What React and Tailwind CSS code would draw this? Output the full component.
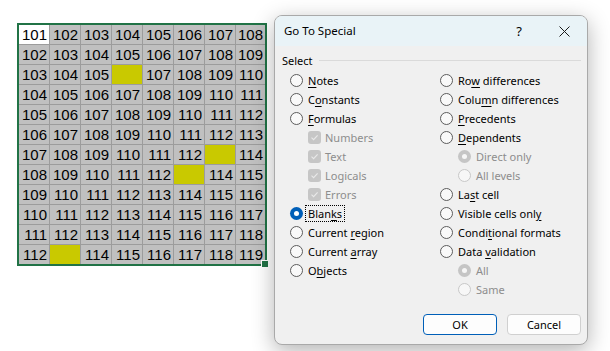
import React from "react";

const ROWS = 12;
const COLS = 8;
const YELLOW = new Set(["2-3", "6-6", "7-5", "11-1"]);

function Grid() {
  const cells = [];
  for (let r = 0; r < ROWS; r++) {
    for (let c = 0; c < COLS; c++) {
      const key = `${r}-${c}`;
      const yellow = YELLOW.has(key);
      const first = r === 0 && c === 0;
      cells.push(
        <div
          key={key}
          className={`h-[19px] flex items-center justify-end pr-[2px] ${
            yellow ? "bg-[#c9c900]" : first ? "bg-white" : "bg-[#c0c0c0]"
          }`}
        >
          {!yellow && <span>{101 + r + c}</span>}
        </div>
      );
    }
  }
  return (
    <div className="relative ml-[17px] mt-[22px] w-fit border-2 border-[#217346]">
      <div
        className="grid grid-cols-[repeat(7,30px)_29px] gap-px bg-[#9c9c9c] text-[15px] leading-none text-black"
        style={{ fontFamily: '"Liberation Sans", Arial, sans-serif' }}
      >
        {cells}
      </div>
      <div className="absolute right-[-4px] bottom-[-4px] w-[6px] h-[6px] bg-[#217346] border border-white box-content" />
    </div>
  );
}

function Radio({ checked, disabled }) {
  if (checked && !disabled) {
    return (
      <span className="w-[13px] h-[13px] rounded-full bg-[#005fb8] flex items-center justify-center shrink-0">
        <span className="w-[5px] h-[5px] rounded-full bg-white" />
      </span>
    );
  }
  if (checked && disabled) {
    return (
      <span className="w-[13px] h-[13px] rounded-full bg-[#c5c5c5] flex items-center justify-center shrink-0">
        <span className="w-[5px] h-[5px] rounded-full bg-[#f6f6f6]" />
      </span>
    );
  }
  return (
    <span
      className={`w-[13px] h-[13px] rounded-full border shrink-0 ${
        disabled ? "border-[#c8c8c8] bg-[#f7f7f7]" : "border-[#5c5c5c] bg-[#f9f9f9]"
      }`}
    />
  );
}

function Check() {
  return (
    <span className="w-[13px] h-[13px] rounded-[3px] bg-[#c6c6c6] flex items-center justify-center shrink-0">
      <svg width="9" height="9" viewBox="0 0 9 9">
        <path d="M1.5 4.7 L3.6 6.7 L7.6 2.3" fill="none" stroke="#e9e9e9" strokeWidth="1.1" />
      </svg>
    </span>
  );
}

function Label({ pre = "", u = "", post = "", disabled, focus }) {
  return (
    <span
      className={`whitespace-nowrap ${disabled ? "text-[#8d8d8d]" : "text-black"} ${
        focus ? "outline-1 outline-dotted outline-black outline-offset-[2px]" : ""
      }`}
    >
      {pre}
      {u && <span className="underline underline-offset-[2px]">{u}</span>}
      {post}
    </span>
  );
}

function Opt({ kind = "radio", checked, disabled, indent, focus, ...label }) {
  return (
    <div className={`flex items-center h-[19px] ${indent ? "pl-[18px]" : ""} ${kind === "check" ? "gap-[4px]" : "gap-[5px]"}`}>
      {kind === "check" ? <Check /> : <Radio checked={checked} disabled={disabled} />}
      <Label disabled={disabled} focus={focus} {...label} />
    </div>
  );
}

function Dialog() {
  return (
    <div
      className="absolute left-[274px] top-[15px] w-[314px] h-[330px] rounded-[8px] border border-[#a9a9a9] bg-[#f0f0f0] overflow-hidden shadow-[0_6px_22px_rgba(0,0,0,0.3)] text-[11px] leading-none"
      style={{ fontFamily: '"Noto Sans", "Open Sans", sans-serif' }}
    >
      <div className="h-[30px] bg-[#e9f3f7] flex items-center pl-[9px] text-black">
        <span className="flex-1 text-[11.5px]">Go To Special</span>
        <span className="w-[14px] text-center text-[13px] mr-[33px]">?</span>
        <svg width="11" height="11" viewBox="0 0 11 11" className="mr-[17px]">
          <path d="M0.5 0.5 L10.5 10.5 M10.5 0.5 L0.5 10.5" stroke="#1a1a1a" strokeWidth="1" />
        </svg>
      </div>
      <div className="pt-[6px] pl-[7px]">
        <div className="flex items-center h-[16px] pr-[6px]">
          <span className="text-black">Select</span>
          <span className="flex-1 h-px bg-[#dadada] ml-[6px]" />
        </div>
        <div className="flex mt-[3px] pl-[8px]">
          <div className="w-[150px] flex flex-col">
            <Opt u="N" post="otes" />
            <Opt pre="C" u="o" post="nstants" />
            <Opt u="F" post="ormulas" />
            <Opt kind="check" indent disabled pre="Numbers" />
            <Opt kind="check" indent disabled pre="Text" />
            <Opt kind="check" indent disabled pre="Logicals" />
            <Opt kind="check" indent disabled pre="Errors" />
            <Opt checked focus pre="Blan" u="k" post="s" />
            <Opt pre="Current " u="r" post="egion" />
            <Opt pre="Current " u="a" post="rray" />
            <Opt pre="O" u="b" post="jects" />
          </div>
          <div className="flex flex-col">
            <Opt pre="Ro" u="w" post=" differences" />
            <Opt pre="Colu" u="m" post="n differences" />
            <Opt u="P" post="recedents" />
            <Opt u="D" post="ependents" />
            <Opt indent checked disabled pre="Direct only" />
            <Opt indent disabled pre="All levels" />
            <Opt pre="La" u="s" post="t cell" />
            <Opt pre="Visible cells onl" u="y" />
            <Opt pre="Condi" u="t" post="ional formats" />
            <Opt pre="Data " u="v" post="alidation" />
            <Opt indent checked disabled pre="All" />
            <Opt indent disabled pre="Same" />
          </div>
        </div>
        <div className="flex justify-end gap-[10px] mt-[15px] pr-[6px]">
          <button className="w-[74px] h-[21px] rounded-[4px] border border-[#005fb8] bg-[#fdfdfd] text-black text-[11px] flex items-center justify-center">
            OK
          </button>
          <button className="w-[74px] h-[21px] rounded-[4px] border border-[#d0d0d0] bg-[#fdfdfd] text-black text-[11px] flex items-center justify-center">
            Cancel
          </button>
        </div>
      </div>
    </div>
  );
}

export default function App() {
  return (
    <div className="relative w-[610px] h-[351px] bg-white overflow-hidden">
      <div className="pt-px">
        <Grid />
      </div>
      <Dialog />
    </div>
  );
}
